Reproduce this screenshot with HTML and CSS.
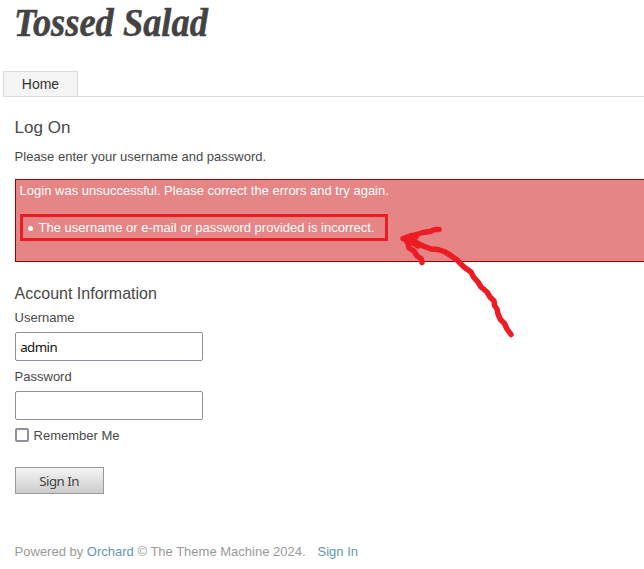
FILE: index.html
```html
<!DOCTYPE html>
<html lang="en">
<head>
<meta charset="utf-8">
<title>Log On - Tossed Salad</title>
<link rel="stylesheet" href="styles.css">
</head>
<body>
<header class="site-header"><h1 class="brand">Tossed Salad</h1></header>
<nav class="menu"><a class="tab">Home</a></nav>
<main class="content">
  <h2 class="page-title">Log On</h2>
  <p class="intro">Please enter your username and password.</p>
  <div class="errors">
    <span class="summary">Login was unsuccessful. Please correct the errors and try again.</span>
    <ul class="error-list"><li>The username or e-mail or password provided is incorrect.</li></ul>
    <svg class="arrow" width="120" height="116" viewBox="398 224 120 116">
      <path d="M511 334.500L507 329L504.500 323.500L500.500 319.500L498 314L497 309L494.500 305.500L494 301L490 297L487 292L481 287L478 282L473.500 277L471 272L464 267L457 260L450 255L444 251.500L438 249.500L431 249L423 246L415 242L403 238.500L410 236L415 235L423 232.500L430 231.500L435 229.500H439M404 238.500L408 243L409 248L414 251L417 256L421 258.500L422 262.500M408 240L418 246M409 238L416 237"/>
    </svg>
  </div>
  <form class="logon">
    <h3 class="legend">Account Information</h3>
    <label class="label" for="user">Username</label>
    <input class="field" id="user" type="text" value="admin">
    <label class="label" for="pass">Password</label>
    <input class="field" id="pass" type="password">
    <label class="remember"><input class="check" type="checkbox">Remember Me</label>
    <button class="submit" type="button">Sign In</button>
  </form>
</main>
<footer class="footer">Powered by <a>Orchard</a> © The Theme Machine 2024.<a class="signin">Sign In</a></footer>
</body>
</html>
```
FILE: styles.css
```css
* { box-sizing: border-box; }
body {
  margin: 0;
  height: 569px;
  overflow: hidden;
  background: #fff;
  color: #484848;
  font: 13px/18px "Liberation Sans", Arial, sans-serif;
}
h1, h2, h3, p, ul { margin: 0; padding: 0; font-weight: normal; }
.site-header { height: 71px; padding-left: 14px; }
.brand {
  width: max-content;
  color: #434343;
  font: italic bold 41px/44px "Liberation Serif", serif;
  transform: scaleX(.888);
  transform-origin: left;
  -webkit-text-stroke: .5px #434343;
}
.menu { display: flex; height: 26px; margin-left: 3px; border-bottom: 1px solid #dbdbdb; }
.tab {
  width: 75px;
  height: 25px;
  border: 1px solid #dbdbdb;
  border-bottom: 0;
  background: #f5f5f5;
  color: #333;
  font-size: 14px;
  line-height: 25px;
  text-align: center;
}
.content { padding-left: 14.6px; }
.page-title { padding-top: 20px; font-size: 17px; line-height: 22px; }
.intro { margin-top: 9px; }
.errors {
  position: relative;
  width: 640px;
  height: 83px;
  margin-top: 13px;
  padding: 2px 4px;
  border: 1px solid #990000;
  background: #e68585;
  color: #fff;
}
.summary { display: block; }
.error-list {
  width: 368px;
  height: 27px;
  margin-top: 14px;
  padding-left: 5px;
  border: 3px solid #ed1c24;
  line-height: 21px;
  list-style: none;
}
.error-list li { display: flex; align-items: center; gap: 6px; }
.error-list li::before { content: ""; width: 5px; height: 5px; margin-top: 1px; border-radius: 50%; background: #fff; }
.arrow { position: absolute; left: 382px; top: 44px; fill: none; stroke: #ed1c24; stroke-width: 5.5; stroke-linecap: round; stroke-linejoin: round; }
.logon { display: flex; flex-direction: column; align-items: flex-start; padding-top: 22px; }
.legend { font-size: 16px; line-height: 19px; }
.label { height: 29px; padding-top: 6px; }
.field {
  width: 188px;
  height: 29px;
  margin: 0 0 1px;
  padding: 1px 5px 1px 4.6px;
  border: 1px solid #8f8f9d;
  border-radius: 2px;
  background: #fff;
  color: #111;
  font: 13.3px "Noto Sans", sans-serif;
  letter-spacing: -.55px;
}
.remember { display: flex; align-items: center; gap: 5px; height: 18px; margin-top: 6px; }
.check { appearance: none; width: 14px; height: 14px; margin: -2px 0 0; border: 2px solid #8f8f9d; border-radius: 2px; }
.submit {
  width: 89px;
  height: 27px;
  margin-top: 22px;
  padding: 1px 0 0;
  border: 1px solid #999;
  background: linear-gradient(#f5f5f5, #ccc);
  color: #434343;
  font: 13.3px "Noto Sans", sans-serif;
  letter-spacing: -.5px;
}
.footer { padding: 49px 0 0 14.6px; color: #999; }
.footer a { color: #5f97af; }
.footer .signin { margin-left: 12px; }
```
